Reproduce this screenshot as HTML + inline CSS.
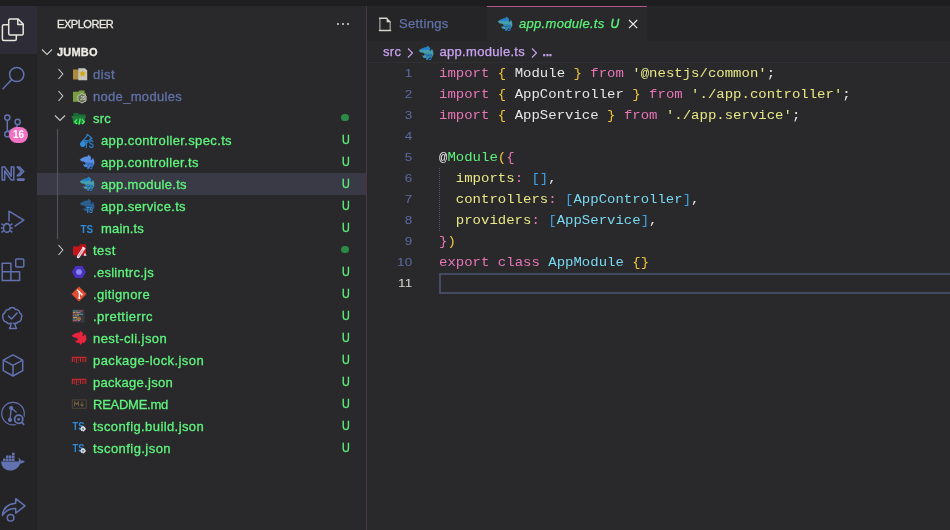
<!DOCTYPE html>
<html>
<head>
<meta charset="utf-8">
<title>app.module.ts - jumbo</title>
<style>
*{box-sizing:border-box;margin:0;padding:0}
html,body{width:950px;height:530px;overflow:hidden;background:#29292c}
body{position:relative;font-family:"Liberation Sans",sans-serif;font-size:13px;color:#e4e4e4}
i{font-style:normal}
#titlebar{position:absolute;left:0;top:0;width:950px;height:6px;background:#1e1e20}
#activity{position:absolute;left:0;top:6px;width:37px;height:524px;background:#242426;overflow:hidden}
#activity .act{position:absolute;left:0;width:37px;height:48px}
#activity .act.on{background:#2e2c37}
#activity svg{position:absolute;overflow:visible}
#badge{position:absolute;left:9px;top:25px;width:19px;height:16px;border-radius:8px;background:#f272c4;color:#fff;font-size:10px;font-weight:bold;line-height:16px;text-align:center}
#sidebar{position:absolute;left:37px;top:6px;width:329px;height:524px;background:#29292c}
#split{position:absolute;left:366px;top:6px;width:1px;height:524px;background:#4c3443}
#sbtitle{position:absolute;left:20px;top:10px;height:16px;line-height:16px;font-size:11px;color:#eceae2;letter-spacing:-0.45px;-webkit-text-stroke:.3px currentColor}
#sbdots{position:absolute;left:299px;top:16px}
.row{position:absolute;left:0;width:329px;height:22px;line-height:22px;white-space:nowrap}
.row.sel{background:#3a3a46}
.row .hdr{position:absolute;left:20px;top:0;font-size:11px;font-weight:bold;color:#eeece4;letter-spacing:0.2px;-webkit-text-stroke:.3px currentColor}
.row .lbl{position:absolute;top:1px;color:#5ff57d;-webkit-text-stroke:.3px currentColor}
.row .lbl.dim{color:#6172a8}
.row .st{position:absolute;left:303.5px;top:0;color:#5df27a;font-size:12px;width:10px;text-align:center;transform:scaleX(.9);-webkit-text-stroke:.35px currentColor}
.row .dot{position:absolute;left:304.4px;top:7.2px;width:7.2px;height:7.2px;border-radius:50%;background:#2c8a47}
.row svg{position:absolute;overflow:visible}
#guide{position:absolute;left:20px;top:123px;width:1px;height:110px;background:#55555c}
#editor{position:absolute;left:367px;top:6px;width:583px;height:524px;background:#29292c}
#tabs{position:absolute;left:0;top:0;width:583px;height:35px;background:#252527}
.tab{position:absolute;top:0;height:35px;line-height:35px;white-space:nowrap}
.tab .tl{position:absolute;top:0;-webkit-text-stroke:.25px currentColor}
.tab svg{position:absolute;overflow:visible}
#tab1{left:0;width:120px;color:#6172a8}
#tab2{left:120px;width:160px;background:#29292c;border-top:1px solid #b2568f}
#fileico{left:10px;top:10px}
#t1l{left:32px;top:0;line-height:36px;letter-spacing:.33px}
#t2ico{left:9.7px;top:9px}
#t2l{left:32px;top:0;line-height:34px;color:#5df27a;font-style:italic;letter-spacing:.3px}
#t2u{left:123.5px;top:0;line-height:34px;color:#5df27a;font-style:italic;font-size:12px;-webkit-text-stroke:.45px currentColor !important}
#closex{left:140px;top:11px}
#crumbs{position:absolute;left:0;top:35px;width:583px;height:22px;line-height:22px;color:#c9a3f2;white-space:nowrap;border-bottom:1px solid #303034}
#crumbs .cb{position:absolute;top:0;-webkit-text-stroke:.25px currentColor}
#crumbs svg{position:absolute;top:6px;overflow:visible}
#c1{left:16px;letter-spacing:.3px}
#cico{left:51px;top:4px !important}
#c2{left:72.5px;letter-spacing:.3px}
#c3{left:175.5px;font-size:12px;font-weight:bold;letter-spacing:-.2px}
#code{position:absolute;left:0;top:57px;width:583px;font-family:"Liberation Mono",monospace;font-size:14px;line-height:21px}
.ln{position:relative;height:21px;white-space:pre}
#code,#sidebar,#tabs,#crumbs,#activity{will-change:transform}
.ln .n{position:absolute;left:0;top:-1px;width:45.5px;text-align:right;color:#5d6aa0;font-family:"Liberation Sans",sans-serif;font-size:13.5px;letter-spacing:.2px;transform:scaleY(.86);transform-origin:0 15px}
.ln .c{position:absolute;left:72px;top:0;color:#e6e6e6;transform:scaleY(.86);transform-origin:0 15px;}
.ln.cur .n{color:#d6d6d0}
.k{color:#e676b6}.y{color:#f0c43c}.s{color:#e8e886}.g{color:#5df27a}.b{color:#3f9fe0}.t{color:#78d8f0}
#curline{position:absolute;left:72px;top:210px;width:520px;height:21px;border:2px solid #454a63;border-right:none}
#ig{position:absolute;left:72px;top:105px;width:0;height:63px;border-left:1px dotted #55517a}
</style>
</head>
<body>
<div id="titlebar"></div>
<div id="activity">
<div class="act on" style="top:0px"><svg style="left:1px;top:12px" width="24" height="24" viewBox="0 0 24 24" fill="none" stroke="#e8e6dc" stroke-width="1.5" stroke-linejoin="round"><path d="M9.2 1H17.1L22.2 6.100V15.500Q22.2 17 20.7 17H9.2Q7.7 17 7.7 15.500V2.500Q7.7 1 9.2 1Z"/><path d="M16.800 1V6.400H22.2"/><path d="M7.7 6.800H2.900Q1.4 6.800 1.4 8.300V21Q1.4 22.500 2.900 22.500H13.800Q15.300 22.500 15.300 21V17"/></svg></div>
<div class="act " style="top:48px"><svg style="left:1px;top:12px" width="24" height="24" viewBox="0 0 24 24" fill="none" stroke="#6272b0" stroke-width="1.5"><circle cx="15.700" cy="8.500" r="7.100"/><path d="M10.700 13.600L1.5 23.200"/></svg></div>
<div class="act " style="top:96px"><svg style="left:1px;top:12px" width="24" height="24" viewBox="0 0 24 24" fill="none" stroke="#6272b0" stroke-width="1.500"><circle cx="6.300" cy="3.600" r="2.600"/><circle cx="6.300" cy="20.200" r="2.600"/><circle cx="16.600" cy="7.900" r="2.600"/><path d="M6.300 6.200v11.400M16.600 10.500c0 4-6 4.500-9.500 7"/></svg><div id="badge">16</div></div>
<div class="act " style="top:144px"><svg style="left:1px;top:12px" width="24" height="24" viewBox="0 0 24 24" fill="none" stroke="#6272b0" stroke-width="1.500" stroke-linejoin="round"><path d="M1.100 18.100V5h2.600l6.500 9.200V5h2.600v13.100h-2.600L3.700 8.900v9.200z"/><path d="M16.200 5h2.300l4.300 4.400-4.300 4.400h-2.300l4.300-4.400z"/><rect x="16.400" y="16.900" width="6.800" height="1.400" rx=".7"/></svg></div>
<div class="act " style="top:192px"><svg style="left:1px;top:12px" width="24" height="24" viewBox="0 0 24 24" fill="none" stroke="#6272b0" stroke-width="1.500" stroke-linejoin="round"><path d="M8 11.500V1.200L22.800 10.200 13.500 16.300"/><ellipse cx="5.900" cy="17.900" rx="3.300" ry="4.300"/><path d="M3.200 15.600a2.800 2.800 0 0 1 5.400 0M0 17.900h2.600M9.200 17.900h2.600M0.500 13.600l2.300 1.900M11.300 13.600l-2.300 1.900M0.500 22.400l2.300-1.900M11.300 22.400l-2.300-1.900"/></svg></div>
<div class="act " style="top:240px"><svg style="left:1px;top:12px" width="24" height="24" viewBox="0 0 24 24" fill="none" stroke="#6272b0" stroke-width="1.500" stroke-linejoin="round"><path d="M1.200 5.200H9.900V13.800H18.600V22.400H1.200ZM1.200 13.800H9.900V22.400"/><rect x="14.700" y="1" width="8.100" height="8" rx="1"/></svg></div>
<div class="act " style="top:288px"><svg style="left:1px;top:12px" width="24" height="24" viewBox="0 0 24 24" fill="none" stroke="#6272b0" stroke-width="1.500" stroke-linejoin="round" stroke-linecap="round"><path d="M10 17.300c-1.600.6-3.600.2-4.600-1.300-2.100-.2-3.600-2-3.300-4.100-1.100-1.900-.3-4.300 1.800-5.100.2-2.200 2.100-3.600 4-3.200 1.300-2.700 5.300-2.700 6.600 0 2.100-.4 4 1.100 4.100 3.200 2 1 2.800 3.200 1.700 5.100.3 2.100-1.300 3.900-3.400 4.100-1 1.500-3.200 1.900-4.700 1.300"/><path d="M10 17.300c0 2-.5 3.700-1.500 5.200h7c-1-1.500-1.500-3.200-1.500-5.200"/><path d="M7.500 10l3 3 5.500-6"/></svg></div>
<div class="act " style="top:336px"><svg style="left:1px;top:12px" width="24" height="24" viewBox="0 0 24 24" fill="none" stroke="#6272b0" stroke-width="1.500" stroke-linejoin="round"><path d="M12 .8l9.700 5.300v10.600L12 22 2.300 16.700V6.100z"/><path d="M2.300 6.100l9.700 5.300 9.700-5.300M12 11.400V22"/></svg></div>
<div class="act " style="top:384px"><svg style="left:1px;top:12px" width="24" height="24" viewBox="0 0 24 24" fill="none" stroke="#6272b0" stroke-width="1.200"><circle cx="12" cy="11.600" r="11.300"/><circle cx="10.200" cy="6.100" r="1.500" fill="#6272b0"/><circle cx="9" cy="17.900" r="1.500" fill="#6272b0"/><path d="M10.200 6.100L9 17.900M10.200 6.100l5.500 4.300" stroke-width="1.300"/><circle cx="17.700" cy="17.300" r="6" fill="#242426" stroke="none"/><circle cx="17.700" cy="17.300" r="4.100" stroke-width="1.800"/><circle cx="17.700" cy="17.300" r="1.400" fill="#6272b0" stroke="none"/><path d="M20.800 20.500l2.300 2.300" stroke-width="1.800"/></svg></div>
<div class="act " style="top:432px"><svg style="left:1px;top:12px" width="24" height="24" viewBox="0 0 24 24" fill="#6272b0"><path d="M0 11.500h17.500c.6-1.200.6-2.600-.2-3.800 1.600.6 2.500 1.800 2.700 3 1.300-.4 2.500-.2 3.800.5-1 1.800-2.800 2.300-4.500 2.200-1.800 4.600-5.500 7.100-10.300 7.100C3.500 20.500.5 17 0 11.500z"/><path d="M2 8.500h2.600v2.400H2zM5 8.500h2.600v2.400H5zM8 8.500h2.600v2.400H8zM11 8.500h2.600v2.400H11zM5 5.600h2.600V8H5zM8 5.600h2.600V8H8zM11 5.600h2.600V8H11zM11 2.700h2.600v2.400H11z"/></svg></div>
<div class="act " style="top:480px"><svg style="left:1px;top:12px" width="24" height="24" viewBox="0 0 24 24" fill="none" stroke="#6272b0" stroke-width="1.500" stroke-linejoin="round"><path transform="translate(.7 -1.100)" d="M14 1.800L23.300 9 14 16.200V11.600C8.500 11.200 4 13.500 .8 18.500 1.300 11.500 6 7.200 14 6.400Z"/><circle cx="9.600" cy="19.700" r="5.300" fill="#242426" stroke="none"/><circle cx="9.600" cy="19.700" r="3.300"/></svg></div>
</div>
<div id="sidebar">
<div id="sbtitle">EXPLORER</div>
<svg id="sbdots" width="14" height="4" viewBox="0 0 14 4"><circle cx="2" cy="2" r="1" fill="#d8d8d8"/><circle cx="7" cy="2" r="1" fill="#d8d8d8"/><circle cx="12" cy="2" r="1" fill="#d8d8d8"/></svg>
<div class="row" style="top:35px"><svg style="left:4.0px;top:5px" width="12" height="12" viewBox="0 0 12 12"><path d="M1 3.500l5 5 5-5" fill="none" stroke="#c8c8c8" stroke-width="1.100"/></svg><span class="hdr">JUMBO</span></div>
<div class="row" style="top:57px"><svg style="left:17.5px;top:5px" width="12" height="12" viewBox="0 0 12 12"><path d="M3.500 1l4.300 5-4.300 5" fill="none" stroke="#c6c6c6" stroke-width="1.100"/></svg><svg style="left:34px;top:3px" width="16" height="16" viewBox="0 0 16 16"><g opacity=".82" transform="translate(1 .5)"><path d="M1 3h5l1 1h4v9H1z" fill="#c9a23f"/><path d="M6.300 1.800h6.700l2.200 2.200v9.800H6.300z" fill="#ebe8de"/><path d="M10.600 3.600l1.100 2.200 2.400.3-1.700 1.700.4 2.400-2.200-1.200-2.200 1.200.4-2.400-1.700-1.700 2.400-.3z" fill="#f7c61a"/></g></svg><span class="lbl dim" style="left:56px;letter-spacing:0.45px">dist</span></div>
<div class="row" style="top:79px"><svg style="left:17.5px;top:5px" width="12" height="12" viewBox="0 0 12 12"><path d="M3.500 1l4.300 5-4.300 5" fill="none" stroke="#c6c6c6" stroke-width="1.100"/></svg><svg style="left:34px;top:3px" width="16" height="16" viewBox="0 0 16 16"><g opacity=".82" transform="translate(1 .3)"><path d="M1 3.500h5.500l1-1.300h5V5H14v8.500H1z" fill="#8cba45"/><path d="M10 5.300l4.100 2.400v4.700L10 14.800l-4.100-2.400V7.700z" fill="#74845c" stroke="#e8e8e8" stroke-width=".9"/><text x="7.900" y="11.700" font-size="4.800" font-weight="bold" fill="#f0f0f0" font-family="Liberation Sans">JS</text></g></svg><span class="lbl dim" style="left:56px;letter-spacing:0.31px">node_modules</span></div>
<div class="row" style="top:101px"><svg style="left:17.0px;top:5px" width="12" height="12" viewBox="0 0 12 12"><path d="M1 3.500l5 5 5-5" fill="none" stroke="#c8c8c8" stroke-width="1.100"/></svg><svg style="left:34px;top:3px" width="16" height="16" viewBox="0 0 16 16"><path d="M2.500 3h4.500l1 1.200h6.500v2H5L2.500 13z" fill="#196b33"/><path d="M1 6.200h13.500L13 14H2.500z" fill="#1f7d3e"/><path d="M0 6.200h15l-.8 1H.8z" fill="#1f7d3e"/><path d="M6.200 9.300L3.800 11.700l2.400 2.400M11 9.300l2.400 2.400-2.400 2.400M9.300 8.500L7.900 14.900" fill="none" stroke="#4dfc5c" stroke-width="1.200"/></svg><span class="lbl" style="left:56px;letter-spacing:0.23px">src</span><span class="dot"></span></div>
<div class="row" style="top:123px"><svg style="left:42px;top:3px" width="16" height="16" viewBox="0 0 16 16"><g transform="translate(-1.600 2.300) rotate(42 7 8)"><path d="M4 0h6v1.300h-.8v9.200a2.200 2.200 0 0 1-4.400 0V1.300H4z" fill="none" stroke="#2f8ad8" stroke-width="1"/><path d="M4.800 5.500h4.400v5a2.200 2.200 0 0 1-4.400 0z" fill="#2f8ad8"/></g><text x="5" y="15.500" font-size="11" font-weight="bold" fill="#2b7bbf" font-family="Liberation Sans" textLength="10" lengthAdjust="spacingAndGlyphs" stroke="#29292c" stroke-width=".3" paint-order="stroke">TS</text></svg><span class="lbl" style="left:64px;letter-spacing:0.37px">app.controller.spec.ts</span><span class="st">U</span></div>
<div class="row" style="top:145px"><svg style="left:42px;top:3px" width="16" height="16" viewBox="0 0 16 16"><path d="M0.8 5.500L3.200 3.900L6.100 2.800L8.800 2.600L9 .9L11.100 2L12.200 3.900L11.300 5.300L12.600 5.900L14 4.100L15.100 6.600L15.300 9.500L14.200 11.700L12.800 13.200L12 12.200L10.700 13.600L9 15.100L8.800 12.800L7.400 13L5.300 12.600L4.100 10.300L5.900 10.900L7 9L5.300 7.800L2.400 7.200Z" fill="#5a8fe6" stroke="#5a8fe6" stroke-width=".15" stroke-linejoin="round"/><text x="7" y="15.4" font-size="8.500" font-weight="bold" font-style="italic" fill="#2583e4" font-family="Liberation Sans" textLength="7" lengthAdjust="spacingAndGlyphs" stroke="#26262a" stroke-width=".7" paint-order="stroke" stroke-opacity=".75">TS</text></svg><span class="lbl" style="left:64px;letter-spacing:0.36px">app.controller.ts</span><span class="st">U</span></div>
<div class="row sel" style="top:167px"><svg style="left:42px;top:3px" width="16" height="16" viewBox="0 0 16 16"><path d="M0.8 5.500L3.200 3.900L6.100 2.800L8.800 2.600L9 .9L11.100 2L12.200 3.900L11.300 5.300L12.600 5.900L14 4.100L15.100 6.600L15.300 9.500L14.200 11.700L12.800 13.200L12 12.200L10.700 13.600L9 15.100L8.800 12.800L7.400 13L5.300 12.600L4.100 10.300L5.900 10.900L7 9L5.300 7.800L2.400 7.200Z" fill="#469fae" stroke="#469fae" stroke-width=".15" stroke-linejoin="round"/><path d="M2.600 4.300L6.100 2.800L8.800 2.600L9 .9L11.100 2L12.200 3.900L11.300 5.300L9.300 4.500L7.800 5.400L6.300 4.600L4.800 5.500L3.600 4.700Z" fill="#2180d2"/><text x="7" y="15.4" font-size="8.500" font-weight="bold" font-style="italic" fill="#2583e4" font-family="Liberation Sans" textLength="7" lengthAdjust="spacingAndGlyphs" stroke="#26262a" stroke-width=".7" paint-order="stroke" stroke-opacity=".75">TS</text></svg><span class="lbl" style="left:64px;letter-spacing:0.33px">app.module.ts</span><span class="st">U</span></div>
<div class="row" style="top:189px"><svg style="left:42px;top:3px" width="16" height="16" viewBox="0 0 16 16"><path d="M0.8 5.500L3.200 3.900L6.100 2.800L8.800 2.600L9 .9L11.100 2L12.200 3.900L11.300 5.300L12.600 5.900L14 4.100L15.100 6.600L15.300 9.500L14.200 11.700L12.800 13.200L12 12.200L10.700 13.600L9 15.100L8.800 12.800L7.400 13L5.300 12.600L4.100 10.300L5.900 10.900L7 9L5.300 7.800L2.400 7.200Z" fill="#2b5f8f" stroke="#2b5f8f" stroke-width=".15" stroke-linejoin="round"/><text x="7" y="15.4" font-size="8.500" font-weight="bold" font-style="italic" fill="#3f93e0" font-family="Liberation Sans" textLength="7" lengthAdjust="spacingAndGlyphs" stroke="#26262a" stroke-width=".7" paint-order="stroke" stroke-opacity=".75">TS</text></svg><span class="lbl" style="left:64px;letter-spacing:0.34px">app.service.ts</span><span class="st">U</span></div>
<div class="row" style="top:211px"><svg style="left:42px;top:3px" width="16" height="16" viewBox="0 0 16 16"><text x="1.500" y="12.500" font-size="11.500" font-weight="bold" fill="#2f8ad8" font-family="Liberation Sans" textLength="12.500" lengthAdjust="spacingAndGlyphs">TS</text></svg><span class="lbl" style="left:64px;letter-spacing:0.16px">main.ts</span><span class="st">U</span></div>
<div class="row" style="top:233px"><svg style="left:17.5px;top:5px" width="12" height="12" viewBox="0 0 12 12"><path d="M3.500 1l4.300 5-4.300 5" fill="none" stroke="#c6c6c6" stroke-width="1.100"/></svg><svg style="left:34px;top:3px" width="16" height="16" viewBox="0 0 16 16"><g transform="translate(1 0)"><path d="M1 4.400h6l1.200-2.200h5.800V13.300H1z" fill="#c5161b"/><path d="M7.400 3.600l.8-1.400h5.800v2.200H7z" fill="#a91419"/><path d="M11.500 6.700L6.300 14.700" stroke="#f7e9ec" stroke-width="3" stroke-linecap="round" fill="none"/><path d="M10.600 8L6.700 14.100" stroke="#e58ea0" stroke-width="1.300" stroke-linecap="round" fill="none"/><path d="M10.300 5l3 1.900" stroke="#f7e9ec" stroke-width="1.100" fill="none"/><path d="M12.800 10.500l1.800 3.200h-3z" fill="#f4e4e8"/></g></svg><span class="lbl" style="left:56px;letter-spacing:0.50px">test</span><span class="dot"></span></div>
<div class="row" style="top:255px"><svg style="left:34px;top:3px" width="16" height="16" viewBox="0 0 16 16"><path d="M4.500 2h7l3.500 6-3.500 6h-7L1 8z" fill="#4b32c3"/><path d="M6.100 4.800h3.800l1.900 3.200-1.900 3.200H6.100L4.200 8z" fill="#8484f4" stroke="#35229a" stroke-width=".7"/></svg><span class="lbl" style="left:56px;letter-spacing:0.27px">.eslintrc.js</span><span class="st">U</span></div>
<div class="row" style="top:277px"><svg style="left:34px;top:3px" width="16" height="16" viewBox="0 0 16 16"><path d="M8 .8L15.200 8 8 15.200.8 8z" fill="#e44d32" stroke="#e44d32" stroke-width=".6" stroke-linejoin="round"/><path d="M6 3.600l2.300 2.300V12M8.300 5.900l2.400 2.400" stroke="#fff" stroke-width="1.200" fill="none"/><circle cx="8.300" cy="5.900" r="1" fill="#fff"/><circle cx="8.300" cy="12" r="1" fill="#fff"/><circle cx="10.800" cy="8.400" r="1" fill="#fff"/></svg><span class="lbl" style="left:56px;letter-spacing:0.35px">.gitignore</span><span class="st">U</span></div>
<div class="row" style="top:299px"><svg style="left:34px;top:3px" width="16" height="16" viewBox="0 0 16 16"><rect x="1" y="1.500" width="12.500" height="13" rx="1" fill="#363a41"/><g stroke-width="1" fill="none" opacity=".85"><path d="M2 3h5" stroke="#56b3b4"/><path d="M7.500 3h4" stroke="#ea5e5e"/><path d="M2 4.600h2" stroke="#f7ba3e"/><path d="M4.500 4.600h5" stroke="#bf85bf"/><path d="M2 6.200h3" stroke="#ea5e5e"/><path d="M5.500 6.200h3" stroke="#f7ba3e"/><path d="M9 6.200h3" stroke="#56b3b4"/><path d="M2 7.800h1.500" stroke="#bf85bf"/><path d="M4 7.800h4" stroke="#56b3b4"/><path d="M2 9.400h4" stroke="#f7ba3e"/><path d="M6.500 9.400h3" stroke="#ea5e5e"/><path d="M2 11h2.500" stroke="#56b3b4"/><path d="M5 11h5" stroke="#f7ba3e"/><path d="M2 12.600h4" stroke="#ea5e5e"/><path d="M6.500 12.600h2.500" stroke="#bf85bf"/></g></svg><span class="lbl" style="left:56px;letter-spacing:0.46px">.prettierrc</span><span class="st">U</span></div>
<div class="row" style="top:321px"><svg style="left:34px;top:3px" width="16" height="16" viewBox="0 0 16 16"><path d="M0.8 5.500L3.200 3.900L6.100 2.800L8.800 2.600L9 .9L11.100 2L12.200 3.900L11.300 5.300L12.600 5.900L14 4.100L15.100 6.600L15.300 9.500L14.200 11.700L12.800 13.200L12 12.200L10.700 13.600L9 15.100L8.800 12.800L7.400 13L5.300 12.600L4.100 10.300L5.900 10.900L7 9L5.300 7.800L2.400 7.200Z" fill="#e8243c" stroke="#e8243c" stroke-width=".15" stroke-linejoin="round"/></svg><span class="lbl" style="left:56px;letter-spacing:0.42px">nest-cli.json</span><span class="st">U</span></div>
<div class="row" style="top:343px"><svg style="left:34px;top:3px" width="16" height="16" viewBox="0 0 16 16"><path d="M.8 4.800h14.500v5.300H8.200v.9H5v-.9H.8z" fill="#c8282c"/><path d="M2.200 6.200h2.900v3.900h-1V7.100h-.8v3H2.200zM6 6.200h3v3.900H7.900v.6H6zM7.300 7.100v2h.7v-2zM10 6.200h4.300v3.900h-.9V7.100h-.7v3h-.8V7.100h-.7v3H10z" fill="#29292c"/></svg><span class="lbl" style="left:56px;letter-spacing:0.41px">package-lock.json</span><span class="st">U</span></div>
<div class="row" style="top:365px"><svg style="left:34px;top:3px" width="16" height="16" viewBox="0 0 16 16"><path d="M.8 4.800h14.500v5.300H8.200v.9H5v-.9H.8z" fill="#c8282c"/><path d="M2.200 6.200h2.900v3.900h-1V7.100h-.8v3H2.200zM6 6.200h3v3.900H7.900v.6H6zM7.300 7.100v2h.7v-2zM10 6.200h4.300v3.900h-.9V7.100h-.7v3h-.8V7.100h-.7v3H10z" fill="#29292c"/></svg><span class="lbl" style="left:56px;letter-spacing:0.28px">package.json</span><span class="st">U</span></div>
<div class="row" style="top:387px"><svg style="left:34px;top:3px" width="16" height="16" viewBox="0 0 16 16"><rect x="1.300" y="3.900" width="14" height="8.400" fill="none" stroke="#4d4438" stroke-width="1.100"/><path d="M3.500 10.300V5.900l2 2.400 2-2.400v4.400" fill="none" stroke="#6e5c3e" stroke-width="1.100"/><path d="M11 5.700v4M9.400 8.300l1.600 1.800 1.600-1.800" fill="none" stroke="#6e5c3e" stroke-width="1.100"/></svg><span class="lbl" style="left:56px;letter-spacing:-0.26px">README.md</span><span class="st">U</span></div>
<div class="row" style="top:409px"><svg style="left:34px;top:3px" width="16" height="16" viewBox="0 0 16 16"><text x="1.600" y="11.500" font-size="11.500" font-weight="bold" fill="#2f8ad8" font-family="Liberation Sans" textLength="11.800" lengthAdjust="spacingAndGlyphs">TS</text><circle cx="12" cy="10.800" r="2.300" fill="#d9dde3" stroke="#f4f4f4" stroke-width=".8" stroke-dasharray="1.200 .8"/><circle cx="12" cy="10.800" r=".9" fill="#555b66"/></svg><span class="lbl" style="left:56px;letter-spacing:0.41px">tsconfig.build.json</span><span class="st">U</span></div>
<div class="row" style="top:431px"><svg style="left:34px;top:3px" width="16" height="16" viewBox="0 0 16 16"><text x="1.600" y="11.500" font-size="11.500" font-weight="bold" fill="#2f8ad8" font-family="Liberation Sans" textLength="11.800" lengthAdjust="spacingAndGlyphs">TS</text><circle cx="12" cy="10.800" r="2.300" fill="#d9dde3" stroke="#f4f4f4" stroke-width=".8" stroke-dasharray="1.200 .8"/><circle cx="12" cy="10.800" r=".9" fill="#555b66"/></svg><span class="lbl" style="left:56px;letter-spacing:0.44px">tsconfig.json</span><span class="st">U</span></div>
<div id="guide"></div>
</div>
<div id="split"></div>
<div id="editor">
<div id="tabs">
<div class="tab" id="tab1"><svg id="fileico" width="16" height="16" viewBox="0 0 16 16"><path d="M2.900 2.200V14.500M13.200 5.500V14.500" fill="none" stroke="#8e8e8c" stroke-width="1.500"/><path d="M2.500 2.200H9.800M2.500 14.500H13.600" fill="none" stroke="#d4d4c8" stroke-width="1.400" stroke-linecap="round"/><path d="M9.600 1.500L14 5.900V6.200H9.600z" fill="#dcdcd0"/></svg><span class="tl" id="t1l">Settings</span></div>
<div class="tab" id="tab2"><svg id="t2ico" width="16" height="16" viewBox="0 0 16 16"><path d="M0.8 5.500L3.200 3.900L6.100 2.800L8.800 2.600L9 .9L11.100 2L12.200 3.900L11.300 5.300L12.600 5.900L14 4.100L15.100 6.600L15.300 9.500L14.200 11.700L12.800 13.200L12 12.200L10.700 13.600L9 15.100L8.800 12.800L7.400 13L5.300 12.600L4.100 10.300L5.900 10.900L7 9L5.300 7.800L2.400 7.200Z" fill="#469fae" stroke="#469fae" stroke-width=".15" stroke-linejoin="round"/><path d="M2.600 4.300L6.100 2.800L8.800 2.600L9 .9L11.100 2L12.200 3.900L11.300 5.300L9.300 4.500L7.800 5.400L6.300 4.600L4.800 5.500L3.600 4.700Z" fill="#2180d2"/><text x="7" y="15.4" font-size="8.500" font-weight="bold" font-style="italic" fill="#2583e4" font-family="Liberation Sans" textLength="7" lengthAdjust="spacingAndGlyphs" stroke="#26262a" stroke-width=".7" paint-order="stroke" stroke-opacity=".75">TS</text></svg><span class="tl" id="t2l">app.module.ts</span><span class="tl" id="t2u">U</span><svg id="closex" width="12" height="12" viewBox="0 0 12 12"><path d="M2 2l8.200 8.200M10.200 2l-8.200 8.200" stroke="#ecece6" stroke-width="1.150" fill="none"/></svg></div>
</div>
<div id="crumbs"><span class="cb" id="c1">src</span><svg class="chev" style="left:38px" width="10" height="12" viewBox="0 0 10 12"><path d="M3 1.500l4.500 4.500L3 10.500" fill="none" stroke="#c9a3f2" stroke-width="1.100"/></svg><svg id="cico" width="16" height="16" viewBox="0 0 16 16"><path d="M0.8 5.500L3.200 3.900L6.100 2.800L8.800 2.600L9 .9L11.100 2L12.200 3.900L11.300 5.300L12.600 5.900L14 4.100L15.100 6.600L15.300 9.500L14.200 11.700L12.800 13.200L12 12.200L10.700 13.600L9 15.100L8.800 12.800L7.400 13L5.300 12.600L4.100 10.300L5.900 10.900L7 9L5.300 7.800L2.400 7.200Z" fill="#469fae" stroke="#469fae" stroke-width=".15" stroke-linejoin="round"/><path d="M2.600 4.300L6.100 2.800L8.800 2.600L9 .9L11.100 2L12.200 3.900L11.300 5.300L9.300 4.500L7.800 5.400L6.300 4.600L4.800 5.500L3.600 4.700Z" fill="#2180d2"/><text x="7" y="15.4" font-size="8.500" font-weight="bold" font-style="italic" fill="#2583e4" font-family="Liberation Sans" textLength="7" lengthAdjust="spacingAndGlyphs" stroke="#26262a" stroke-width=".7" paint-order="stroke" stroke-opacity=".75">TS</text></svg><span class="cb" id="c2">app.module.ts</span><svg class="chev" style="left:162px" width="10" height="12" viewBox="0 0 10 12"><path d="M3 1.500l4.500 4.500L3 10.500" fill="none" stroke="#c9a3f2" stroke-width="1.100"/></svg><span class="cb" id="c3">...</span></div>
<div id="code">
<div class="ln"><span class="n">1</span><span class="c"><i class="k">import</i> <i class="y">{</i> Module <i class="y">}</i> <i class="k">from</i> <i class="s">'@nestjs/common'</i>;</span></div>
<div class="ln"><span class="n">2</span><span class="c"><i class="k">import</i> <i class="y">{</i> AppController <i class="y">}</i> <i class="k">from</i> <i class="s">'./app.controller'</i>;</span></div>
<div class="ln"><span class="n">3</span><span class="c"><i class="k">import</i> <i class="y">{</i> AppService <i class="y">}</i> <i class="k">from</i> <i class="s">'./app.service'</i>;</span></div>
<div class="ln"><span class="n">4</span><span class="c"></span></div>
<div class="ln"><span class="n">5</span><span class="c">@<i class="g">Module</i><i class="y">(</i><i class="k">{</i></span></div>
<div class="ln"><span class="n">6</span><span class="c">  <i class="s">imports</i><i class="k">:</i> <i class="b">[]</i>,</span></div>
<div class="ln"><span class="n">7</span><span class="c">  <i class="s">controllers</i><i class="k">:</i> <i class="b">[</i><i class="t">AppController</i><i class="b">]</i>,</span></div>
<div class="ln"><span class="n">8</span><span class="c">  <i class="s">providers</i><i class="k">:</i> <i class="b">[</i><i class="t">AppService</i><i class="b">]</i>,</span></div>
<div class="ln"><span class="n">9</span><span class="c"><i class="k">}</i><i class="y">)</i></span></div>
<div class="ln"><span class="n">10</span><span class="c"><i class="k">export</i> <i class="k">class</i> <i class="t">AppModule</i> <i class="y">{}</i></span></div>
<div class="ln cur"><span class="n">11</span><span class="c"></span></div>
<div id="curline"></div><div id="ig"></div>
</div>
</div>
</body>
</html>
